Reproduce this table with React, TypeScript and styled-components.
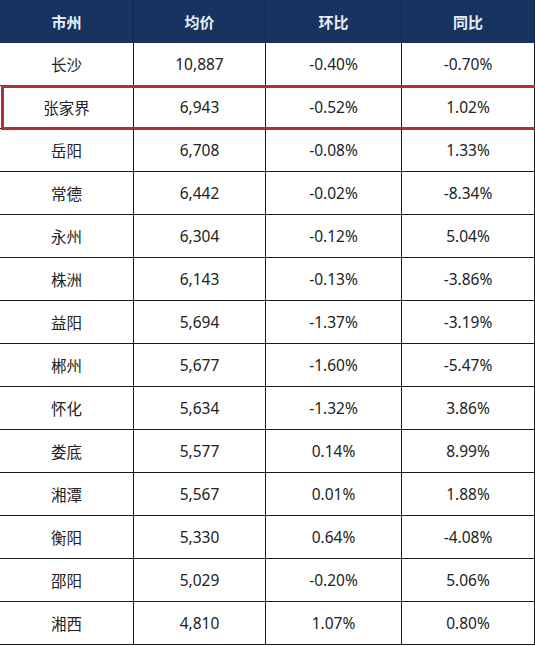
import { FC } from "react";
import styled, { createGlobalStyle } from "styled-components";

const GlobalStyle = createGlobalStyle`
  body {
    margin: 0;
    background: #ffffff;
    font-family: "Noto Sans", "Noto Sans CJK SC", sans-serif;
  }
`;

const columns = ["市州", "均价", "环比", "同比"];

const rows: [string, string, string, string][] = [
  ["长沙", "10,887", "-0.40%", "-0.70%"],
  ["张家界", "6,943", "-0.52%", "1.02%"],
  ["岳阳", "6,708", "-0.08%", "1.33%"],
  ["常德", "6,442", "-0.02%", "-8.34%"],
  ["永州", "6,304", "-0.12%", "5.04%"],
  ["株洲", "6,143", "-0.13%", "-3.86%"],
  ["益阳", "5,694", "-1.37%", "-3.19%"],
  ["郴州", "5,677", "-1.60%", "-5.47%"],
  ["怀化", "5,634", "-1.32%", "3.86%"],
  ["娄底", "5,577", "0.14%", "8.99%"],
  ["湘潭", "5,567", "0.01%", "1.88%"],
  ["衡阳", "5,330", "0.64%", "-4.08%"],
  ["邵阳", "5,029", "-0.20%", "5.06%"],
  ["湘西", "4,810", "1.07%", "0.80%"]
];

const HIGHLIGHT = "张家界";

const App: FC = () => (
  <>
    <GlobalStyle />
    <Table>
      <HeaderRow>
        {columns.map((c) => (
          <HeadCell key={c}>{c}</HeadCell>
        ))}
      </HeaderRow>
      {rows.map((r) => (
        <Row key={r[0]} highlighted={r[0] === HIGHLIGHT}>
          {r.map((v, i) => (
            <Cell key={i}>{v}</Cell>
          ))}
        </Row>
      ))}
    </Table>
  </>
);

export default App;

const Table = styled.div`
  width: 535px;
  overflow: hidden;
`;

const HeaderRow = styled.div`
  display: grid;
  grid-template-columns: 134px 132px 136px 133px;
  height: 43px;
  background: #17335f;
`;

const HeadCell = styled.div`
  display: flex;
  align-items: center;
  justify-content: center;
  border-right: 1px solid #0f2447;
  color: #e9eef7;
  font-family: "Noto Sans CJK SC", sans-serif;
  font-weight: 700;
  font-size: 15px;
`;

const Row = styled.div<{ highlighted?: boolean }>`
  position: relative;
  display: grid;
  grid-template-columns: 134px 132px 136px 133px;
  height: 43px;

  &::after {
    content: "";
    display: ${(p) => (p.highlighted ? "block" : "none")};
    position: absolute;
    left: 1px;
    right: -6px;
    top: -1px;
    bottom: -1px;
    border: 3px solid #b0303b;
    pointer-events: none;
  }
`;

const Cell = styled.div`
  display: flex;
  align-items: center;
  justify-content: center;
  box-sizing: border-box;
  border-right: 1px solid #1a1a1a;
  border-bottom: 1px solid #1a1a1a;
  color: #222222;
  font-size: 15.5px;
`;
